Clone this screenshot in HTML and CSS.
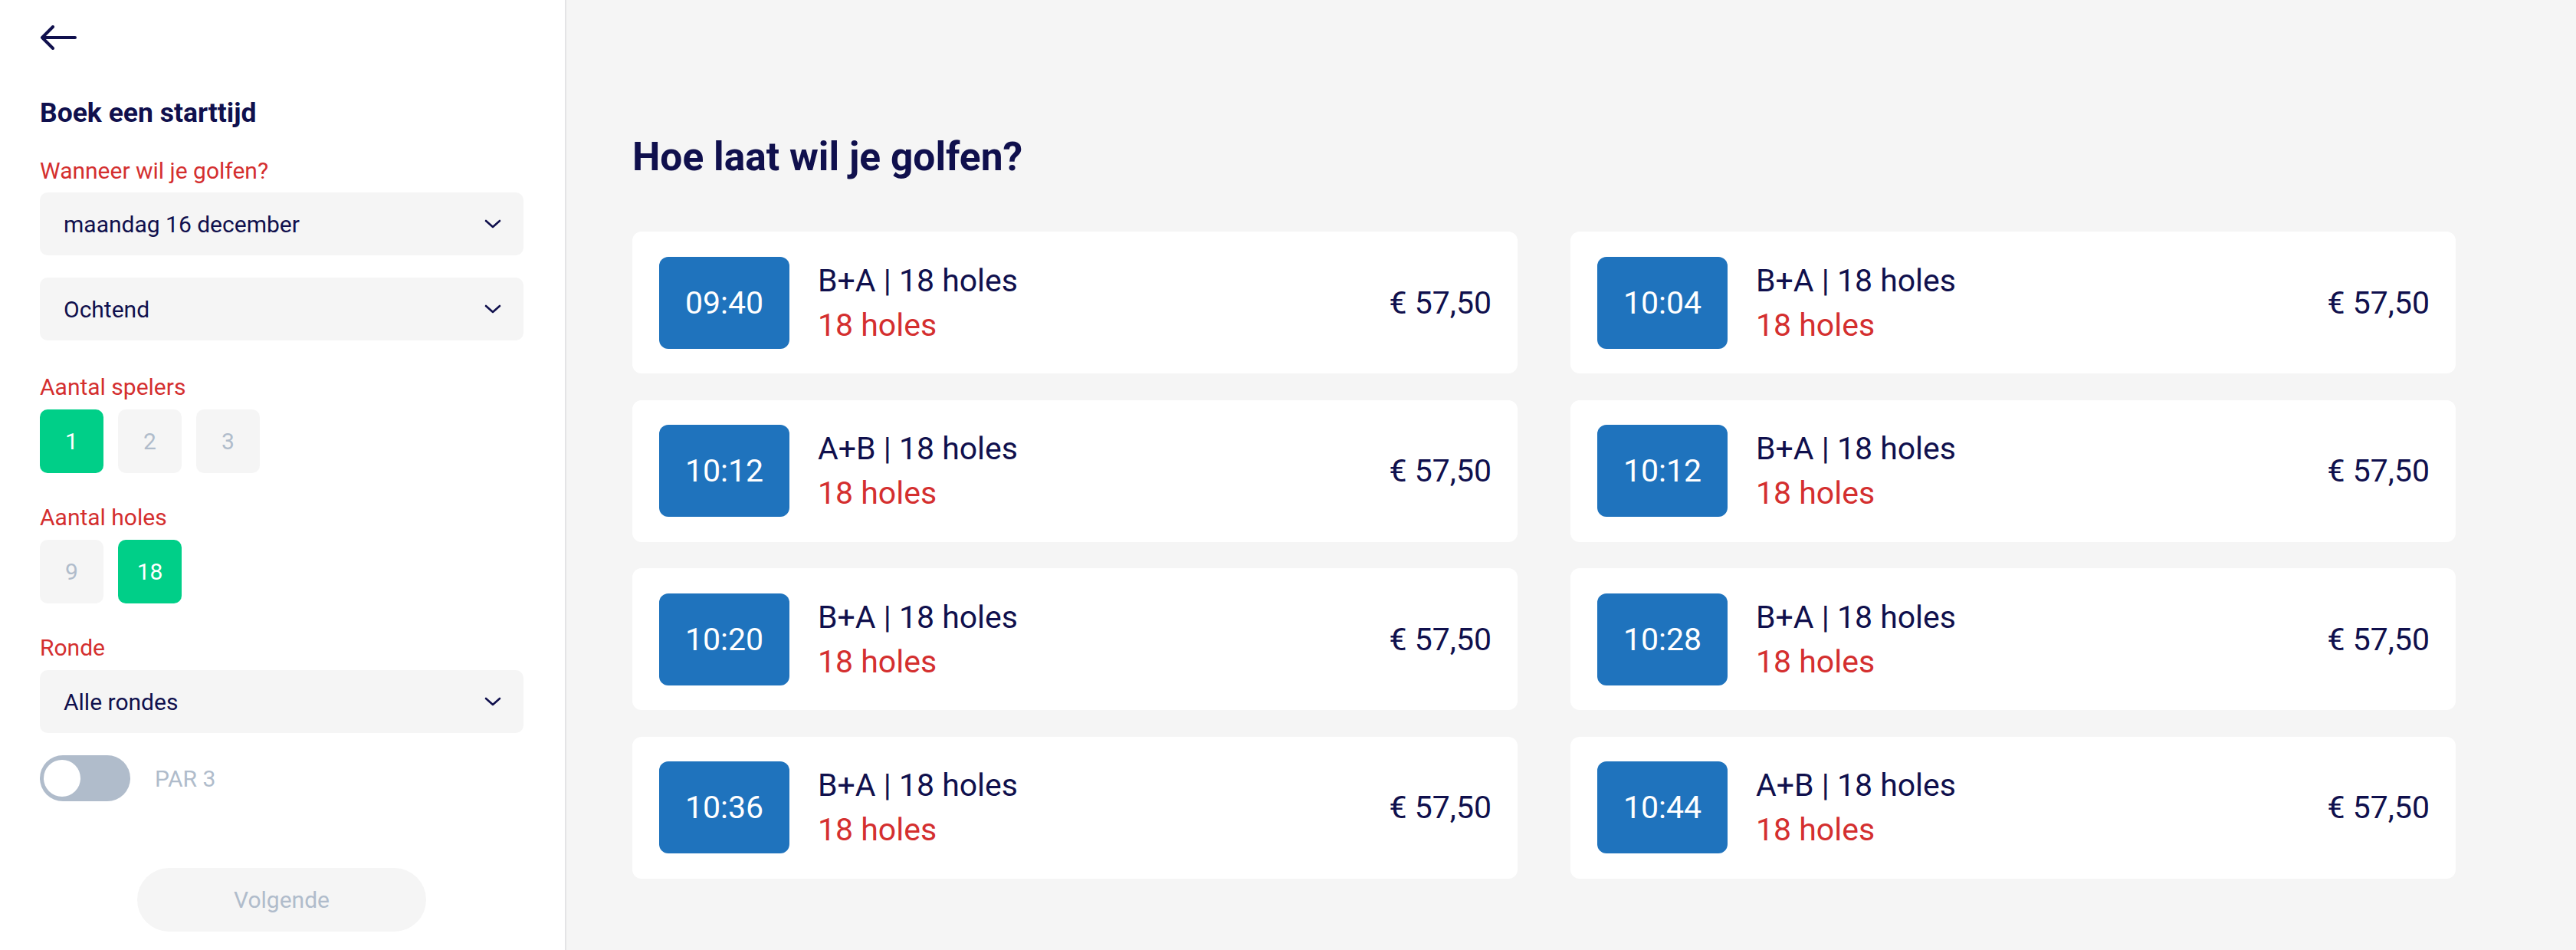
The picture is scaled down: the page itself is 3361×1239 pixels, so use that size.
FILE: index.html
```html
<!DOCTYPE html>
<html lang="nl">
<head>
<meta charset="utf-8">
<title>Boek een starttijd</title>
<link rel="stylesheet" href="styles.css">
</head>
<body>
<div class="app">
  <aside class="sidebar">
    <button class="back" aria-label="Terug">
      <svg width="48" height="32" viewBox="0 0 48 32"><path d="M46 16 H3 M17 2 L3 16 L17 30" fill="none" stroke="#10104d" stroke-width="4" stroke-linecap="round" stroke-linejoin="round"/></svg>
    </button>
    <h1 class="title">Boek een starttijd</h1>

    <div class="label label-first">Wanneer wil je golfen?</div>
    <div class="select">
      <span>maandag 16 december</span>
      <svg class="chev" width="22" height="12" viewBox="0 0 22 12"><path d="M2 2 L11 10 L20 2" fill="none" stroke="#10104d" stroke-width="2.6" stroke-linecap="round" stroke-linejoin="round"/></svg>
    </div>
    <div class="select select-gap">
      <span>Ochtend</span>
      <svg class="chev" width="22" height="12" viewBox="0 0 22 12"><path d="M2 2 L11 10 L20 2" fill="none" stroke="#10104d" stroke-width="2.6" stroke-linecap="round" stroke-linejoin="round"/></svg>
    </div>

    <div class="label label-spelers">Aantal spelers</div>
    <div class="choices">
      <div class="choice active">1</div>
      <div class="choice">2</div>
      <div class="choice">3</div>
    </div>

    <div class="label">Aantal holes</div>
    <div class="choices">
      <div class="choice">9</div>
      <div class="choice active">18</div>
    </div>

    <div class="label">Ronde</div>
    <div class="select">
      <span>Alle rondes</span>
      <svg class="chev" width="22" height="12" viewBox="0 0 22 12"><path d="M2 2 L11 10 L20 2" fill="none" stroke="#10104d" stroke-width="2.6" stroke-linecap="round" stroke-linejoin="round"/></svg>
    </div>

    <div class="toggle-row">
      <div class="toggle"><div class="knob"></div></div>
      <span class="toggle-label">PAR 3</span>
    </div>

    <div class="next-wrap">
      <button class="next">Volgende</button>
    </div>
  </aside>

  <main class="main">
    <h2 class="heading">Hoe laat wil je golfen?</h2>
    <div class="grid">
      <div class="card"><div class="time">09:40</div><div class="info"><div class="course">B+A | 18 holes</div><div class="holes">18 holes</div></div><div class="price">€ 57,50</div></div>
      <div class="card"><div class="time">10:04</div><div class="info"><div class="course">B+A | 18 holes</div><div class="holes">18 holes</div></div><div class="price">€ 57,50</div></div>
      <div class="card"><div class="time">10:12</div><div class="info"><div class="course">A+B | 18 holes</div><div class="holes">18 holes</div></div><div class="price">€ 57,50</div></div>
      <div class="card"><div class="time">10:12</div><div class="info"><div class="course">B+A | 18 holes</div><div class="holes">18 holes</div></div><div class="price">€ 57,50</div></div>
      <div class="card"><div class="time">10:20</div><div class="info"><div class="course">B+A | 18 holes</div><div class="holes">18 holes</div></div><div class="price">€ 57,50</div></div>
      <div class="card"><div class="time">10:28</div><div class="info"><div class="course">B+A | 18 holes</div><div class="holes">18 holes</div></div><div class="price">€ 57,50</div></div>
      <div class="card"><div class="time">10:36</div><div class="info"><div class="course">B+A | 18 holes</div><div class="holes">18 holes</div></div><div class="price">€ 57,50</div></div>
      <div class="card"><div class="time">10:44</div><div class="info"><div class="course">A+B | 18 holes</div><div class="holes">18 holes</div></div><div class="price">€ 57,50</div></div>
    </div>
  </main>
</div>
</body>
</html>
```

FILE: styles.css
```css
* { box-sizing: border-box; }
html, body { margin: 0; padding: 0; }
body {
  font-family: Roboto, "Liberation Sans", Arial, sans-serif;
  color: #10104d;
  background: #f5f5f5;
}
.app {
  display: flex;
  height: 1239px;
  overflow: hidden;
}
.sidebar {
  width: 739px;
  flex: 0 0 739px;
  background: #ffffff;
  border-right: 2px solid #e4e4e6;
  box-shadow: 2px 0 6px rgba(0,0,0,0.03);
  padding: 33px 54px 0 52px;
  display: flex;
  flex-direction: column;
}
.back {
  border: 0;
  background: none;
  padding: 0;
  width: 48px;
  height: 32px;
  display: block;
  cursor: pointer;
}
.back svg { display: block; }
.title {
  margin: 60px 0 0 0;
  font-size: 35.5px;
  line-height: 44px;
  font-weight: 700;
  color: #10104d;
}
.label {
  font-size: 30px;
  line-height: 36px;
  color: #d42f2f;
  margin-top: 40px;
  margin-bottom: 11px;
}
.label-first {
  margin-top: 36px;
  margin-bottom: 10px;
}
.label-spelers {
  margin-top: 43px;
}
.select {
  height: 82px;
  background: #f5f5f5;
  border-radius: 10px;
  display: flex;
  align-items: center;
  justify-content: space-between;
  padding: 0 29px 0 31px;
  font-size: 30px;
  color: #10104d;
}
.select-gap { margin-top: 29px; }
.chev { display: block; }
.choices {
  display: flex;
  gap: 19px;
}
.choice {
  width: 83px;
  height: 83px;
  border-radius: 10px;
  background: #f5f5f5;
  color: #b0bccb;
  font-size: 30px;
  display: flex;
  align-items: center;
  justify-content: center;
}
.choice.active {
  background: #00cf88;
  color: #ffffff;
}
.toggle-row {
  display: flex;
  align-items: center;
  gap: 32px;
  margin-top: 29px;
}
.toggle {
  width: 118px;
  height: 60px;
  border-radius: 30px;
  background: #b0bccb;
  padding: 6px 5px;
}
.knob {
  width: 48px;
  height: 48px;
  border-radius: 50%;
  background: #ffffff;
}
.toggle-label {
  font-size: 30px;
  color: #b0bccb;
}
.next-wrap {
  display: flex;
  justify-content: center;
  margin-top: 87px;
}
.next {
  width: 377px;
  height: 83px;
  border: 0;
  border-radius: 42px;
  background: #f5f5f5;
  color: #b0bccb;
  font-family: inherit;
  font-size: 30px;
}
.main {
  flex: 1;
  background: #f5f5f5;
  padding: 175px 0 0 86px;
}
.heading {
  margin: 0;
  font-size: 51.5px;
  line-height: 60px;
  font-weight: 700;
  color: #10104d;
}
.grid {
  margin-top: 67px;
  display: grid;
  grid-template-columns: repeat(2, 1155px);
  column-gap: 69px;
  row-gap: 34.5px;
}
.card {
  height: 185px;
  background: #ffffff;
  border-radius: 12px;
  display: flex;
  align-items: center;
  padding: 0 34px 0 35px;
}
.time {
  width: 170px;
  height: 120px;
  flex: 0 0 170px;
  border-radius: 12px;
  background: #1f73bd;
  color: #ffffff;
  font-size: 41px;
  display: flex;
  align-items: center;
  justify-content: center;
}
.info {
  flex: 1;
  margin-left: 37px;
  font-size: 41px;
  line-height: 58px;
}
.course { color: #10104d; }
.holes { color: #d42f2f; }
.price {
  font-size: 41px;
  color: #10104d;
}
```
